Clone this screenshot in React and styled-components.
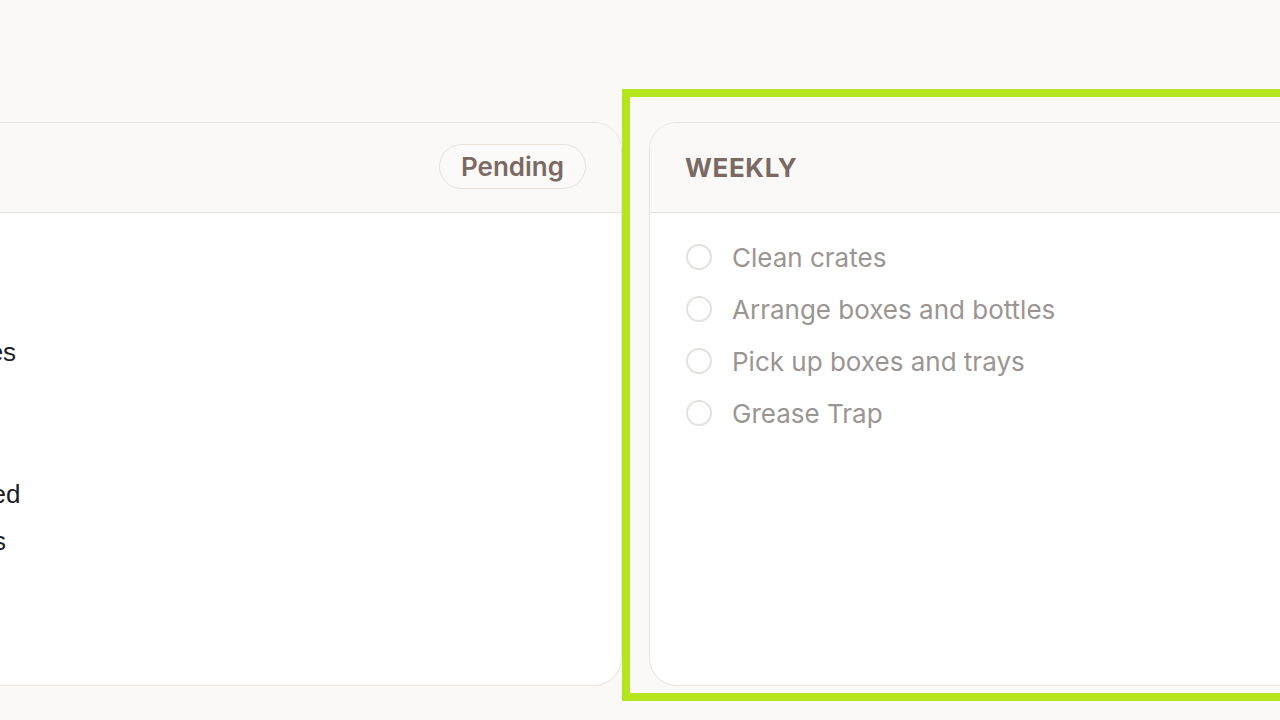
import React from "react";
import styled, { createGlobalStyle } from "styled-components";

const GlobalStyle = createGlobalStyle`
  html, body {
    margin: 0;
    padding: 0;
    overflow: hidden;
    background: #faf9f7;
    font-family: Inter, "Noto Sans", sans-serif;
  }
  #root { width: 1280px; height: 720px; }
`;

const Board = styled.main`
  display: flex;
  align-items: flex-start;
  gap: 27px;
  padding-top: 122px;
  margin-left: -255px;
  height: 720px;
  box-sizing: border-box;
`;

const Column = styled.div`
  position: relative;
  flex: 0 0 877px;
`;

const Card = styled.section`
  box-sizing: border-box;
  height: 564px;
  border: 1px solid #e7e3df;
  border-radius: 28px;
  background: #ffffff;
  overflow: hidden;
  display: flex;
  flex-direction: column;
`;

const Header = styled.header`
  flex: 0 0 90px;
  box-sizing: border-box;
  display: flex;
  align-items: center;
  justify-content: ${(p) => (p.$end ? "flex-end" : "flex-start")};
  padding: 0 35px;
  background: #faf9f8;
  border-bottom: 1px solid #e7e3df;
`;

const Title = styled.h2`
  margin: 0;
  font-family: Inter, "Noto Sans", sans-serif;
  font-size: 26px;
  font-weight: 700;
  letter-spacing: 0.6px;
  color: #7b6a63;
`;

const Badge = styled.span`
  display: inline-flex;
  align-items: center;
  height: 45px;
  box-sizing: border-box;
  padding: 0 21px;
  border: 1.5px solid #e8dfd9;
  border-radius: 999px;
  background: #fbfaf9;
  font-family: Inter, "Noto Sans", sans-serif;
  font-size: 26px;
  font-weight: 600;
  color: #7b6a63;
  margin-top: -3px;
`;

const List = styled.ul`
  list-style: none;
  margin: 0;
  padding: ${(p) => p.$pad};
  display: flex;
  flex-direction: column;
`;

const PendingItem = styled.li`
  height: 47.3px;
  display: flex;
  align-items: center;
  font-family: "Liberation Sans", Arial, sans-serif;
  font-size: 26px;
  color: #1c1c1e;
  white-space: nowrap;
`;

const TaskItem = styled.li`
  height: 52px;
  display: flex;
  align-items: center;
  gap: 20px;
  font-family: Inter, "Noto Sans", sans-serif;
  font-size: 26px;
  color: #9b9592;
  white-space: nowrap;
`;

const Circle = styled.span`
  flex: 0 0 auto;
  width: 26px;
  height: 26px;
  box-sizing: border-box;
  border: 2px solid #e4e1de;
  border-radius: 50%;
  background: #fff;
`;

const Highlight = styled.div`
  position: absolute;
  top: -33px;
  left: -27px;
  bottom: -15px;
  right: -40px;
  border: 8px solid #b5e51c;
  pointer-events: none;
`;

const pending = [
  "Sweep floors",
  "Mop kitchen",
  "Wipe down surfaces",
  "Take out trash",
  "Restock napkins",
  "Ice machine cleaned",
  "Check fridge temps",
];

const weekly = [
  "Clean crates",
  "Arrange boxes and bottles",
  "Pick up boxes and trays",
  "Grease Trap",
];

export default function App() {
  return (
    <>
      <GlobalStyle />
      <Board>
        <Column>
          <Card>
            <Header $end>
              <Badge>Pending</Badge>
            </Header>
            <List $pad="21px 36px">
              {pending.map((t) => (
                <PendingItem key={t}>{t}</PendingItem>
              ))}
            </List>
          </Card>
        </Column>
        <Column>
          <Card>
            <Header>
              <Title>WEEKLY</Title>
            </Header>
            <List $pad="18px 36px">
              {weekly.map((t) => (
                <TaskItem key={t}>
                  <Circle />
                  {t}
                </TaskItem>
              ))}
            </List>
          </Card>
          <Highlight />
        </Column>
      </Board>
    </>
  );
}
